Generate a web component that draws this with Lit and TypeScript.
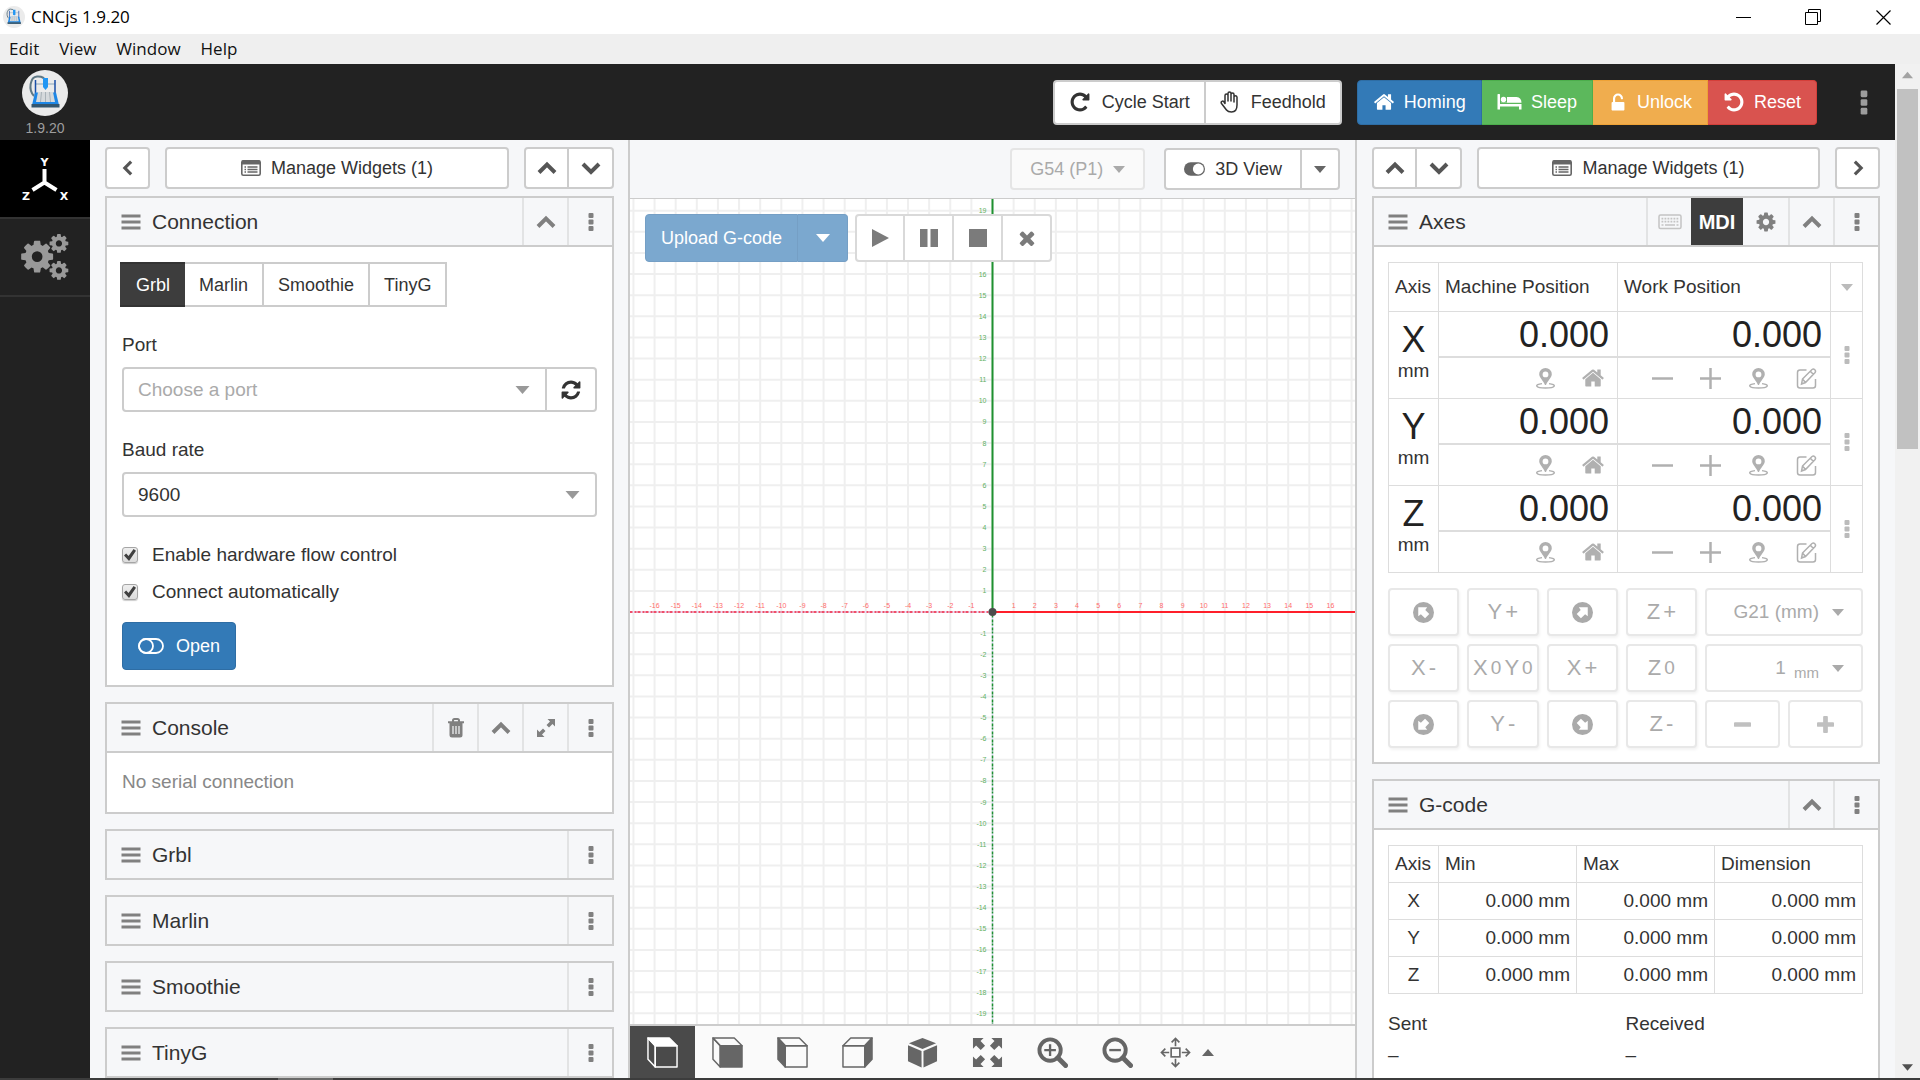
import { LitElement, html, css, svg, nothing } from "lit";
import { customElement, property } from "lit/decorators.js";

const COG =
  "M1152 896q0-106-75-181t-181-75-181 75-75 181 75 181 181 75 181-75 75-181zm512-109v222q0 12-8 23t-20 13l-185 28q-19 54-39 91 35 50 107 138 10 12 10 25t-9 23q-27 37-99 108t-94 71q-12 0-26-9l-138-108q-44 23-91 38-16 136-29 186-7 28-36 28h-222q-14 0-24.5-8.5t-11.5-21.5l-28-184q-49-16-90-37l-141 107q-10 9-25 9-14 0-25-11-126-114-165-168-7-10-7-23 0-12 8-23 15-21 51-66.5t54-70.5q-27-50-41-99l-183-27q-13-2-21-12.5t-8-23.5v-222q0-12 8-23t19-13l186-28q14-46 39-92-40-57-107-138-10-12-10-24 0-10 9-23 26-36 98.5-107.5t94.5-71.5q13 0 26 10l138 107q44-23 91-38 16-136 29-186 7-28 36-28h222q14 0 24.5 8.5t11.5 21.5l28 184q49 16 90 37l142-107q9-9 24-9 13 0 25 10 129 119 165 170 7 8 7 22 0 12-8 23-15 21-51 66.5t-54 70.5q26 50 41 98l183 28q13 2 21 12.5t8 23.5z";

const ARROW_NW = "M5 5H13.500L11.700 7.500L15.500 11.500L11.500 15.500L7.500 11.700L5 13.500Z";

const roundArrow = (turn: number) => svg`
  <circle cx="10" cy="10" r="10" fill="currentColor"/>
  <path d=${ARROW_NW} fill="#fff" transform="rotate(${turn} 10 10)"/>`;

/* name -> [viewBox, shapes] */
const ICONS: Record<string, [string, unknown]> = {
  logo: ["0 0 46 46", svg`
    <circle cx="23" cy="23" r="23" fill="#ebebeb"/>
    <path d="M12 26C6 20 8 7 15 6.500Q22 6 23.500 11" fill="none" stroke="#5f7885" stroke-width="2"/>
    <path d="M13 14H33" stroke="#8aa5b8" stroke-width="1"/>
    <path d="M13.500 10V25M33 10V25" stroke="#1b4fa8" stroke-width="1.500"/>
    <path d="M13 22.500H34L37 35H10Z" fill="#1d87e6"/>
    <path d="M16 22H31L33 32H14Z" fill="#d5d9dc"/>
    <path d="M19.500 22L18.500 32M23.500 22V32M27.500 22L28.500 32" stroke="#a9b2b8" stroke-width="1"/>
    <path d="M9.500 34H37.500V37.500H9.500Z" fill="#33566e"/>
    <path d="M21 8H26V17L23.500 20L21 17Z" fill="#2196f3"/>`],
  axes: ["0 0 48 44", svg`
    <path d="M23.500 12V25.500L11.500 33M23.500 25.500L35.500 33" fill="none" stroke="#fff" stroke-width="4"/>
    <g fill="#fff" font-family="DejaVu Sans, sans-serif" font-weight="700" font-size="11" text-anchor="middle">
      <text x="23.500" y="9">Y</text><text x="5" y="43">Z</text><text x="43" y="43">X</text>
    </g>`],
  cogs: ["0 0 48 46", svg`
    <g fill="currentColor">
      <path transform="translate(-2.500 4) scale(.0208)" d=${COG}/>
      <path transform="translate(27 -1.500) scale(.0122)" d=${COG}/>
      <path transform="translate(27 25.500) scale(.0122)" d=${COG}/>
    </g>`],
  cog: ["0 0 1792 1792", svg`<path fill="currentColor" d=${COG}/>`],
  repeat: ["0 0 1792 1792", svg`<path fill="currentColor" d="M1664 256v448q0 26-19 45t-45 19h-448q-42 0-59-40-17-39 14-69l138-138q-148-137-349-137-104 0-198.500 40.500t-163.500 109.500-109.500 163.500-40.500 198.500 40.500 198.500 109.500 163.500 163.500 109.500 198.500 40.500q119 0 225-52t179-147q7-10 23-12 15 0 25 9l137 138q9 8 9.500 20.500t-7.500 22.500q-109 132-264 204.500t-327 72.500q-156 0-298-61t-245-164-164-245-61-298 61-298 164-245 245-164 298-61q147 0 284.500 55.500t244.500 156.500l130-129q29-31 70-14 39 17 39 59z"/>`],
  undo: ["0 0 1792 1792", svg`<path fill="currentColor" d="M1664 896q0 156-61 298t-164 245-245 164-298 61q-172 0-327-72.500t-264-204.500q-7-10-6.500-22.500t8.500-20.500l137-138q10-9 25-9 16 2 23 12 73 95 179 147t225 52q104 0 198.500-40.500t163.500-109.500 109.500-163.500 40.500-198.500-40.500-198.500-109.500-163.500-163.500-109.500-198.500-40.500q-98 0-188 35.500t-160 101.500l137 138q31 30 14 69-17 40-59 40h-448q-26 0-45-19t-19-45v-448q0-42 40-59 39-17 69 14l130 129q107-101 244.500-156.500t284.500-55.500q156 0 298 61t245 164 164 245 61 298z"/>`],
  home: ["0 0 1792 1792", svg`<path fill="currentColor" d="M1472 992v480q0 26-19 45t-45 19h-384v-384h-256v384h-384q-26 0-45-19t-19-45v-480q0-1 .5-3t.5-3l575-474 575 474q1 2 1 6zm223-69l-62 74q-8 9-21 11h-3q-13 0-21-7l-692-577-692 577q-12 8-24 7-13-2-21-11l-62-74q-8-10-7-23.500t11-21.500l719-599q32-26 76-26t76 26l244 204v-195q0-14 9-23t23-9h192q14 0 23 9t9 23v408l219 182q10 8 11 21.500t-7 23.500z"/>`],
  refresh: ["0 0 1792 1792", svg`<path fill="currentColor" d="M1639 1056q0 5-1 7-64 268-268 434.500t-478 166.500q-146 0-282.500-55t-243.500-157l-129 129q-19 19-45 19t-45-19-19-45v-448q0-26 19-45t45-19h448q26 0 45 19t19 45-19 45l-137 137q71 66 161 102t187 36q134 0 250-65t186-179q11-17 53-117 8-23 30-23h192q13 0 22.500 9.500t9.500 22.500zm25-800v448q0 26-19 45t-45 19h-448q-26 0-45-19t-19-45 19-45l138-138q-148-137-349-137-134 0-250 65t-186 179q-11 17-53 117-8 23-30 23h-199q-13 0-22.500-9.500t-9.500-22.500v-7q65-268 270-434.500t480-166.500q146 0 284 55.500t245 156.500l130-129q19-19 45-19t45 19 19 45z"/>`],
  times: ["0 0 1792 1792", svg`<path fill="currentColor" d="M1490 1322q0 40-28 68l-136 136q-28 28-68 28t-68-28l-294-294-294 294q-28 28-68 28t-68-28l-136-136q-28-28-28-68t28-68l294-294-294-294q-28-28-28-68t28-68l136-136q28-28 68-28t68 28l294 294 294-294q28-28 68-28t68 28l136 136q28 28 28 68t-28 68l-294 294 294 294q28 28 28 68z"/>`],
  unlock: ["0 0 1792 1792", svg`<path fill="currentColor" d="M1376 896q40 0 68 28t28 68v576q0 40-28 68t-68 28h-960q-40 0-68-28t-28-68v-576q0-40 28-68t68-28h32v-320q0-185 131.500-316.500t316.500-131.500 316.500 131.500 131.500 316.500q0 26-19 45t-45 19h-64q-26 0-45-19t-19-45q0-106-75-181t-181-75-181 75-75 181v320h736z"/>`],
  hand: ["0 0 20 22", svg`<path fill="none" stroke="currentColor" stroke-width="1.500" stroke-linejoin="round" stroke-linecap="round" d="M5 12.500V4.500Q5 3 6.500 3T8 4.500V10M8 10V2.500Q8 1 9.500 1T11 2.500V10M11 10V3.500Q11 2 12.500 2T14 3.500V11M14 11V6Q14 4.800 15.400 4.800T17 6V14Q17 21 11.500 21Q8 21 6.500 19L1.500 12.500Q.6 11 2 10.300T4 11L5 12.500"/>`],
  bed: ["0 0 24 18", svg`<g fill="currentColor"><path d="M0 1.500Q0 1 .6 1H1.900Q2.500 1 2.500 1.500V11H24V16.500H21.500V13.500H2.500V16.500H0Z"/><circle cx="6" cy="6.500" r="2.700"/><path d="M9.500 4H19Q24 4.500 24 9.800H3.500V9.500H9.500Z"/></g>`],
  list: ["0 0 20 18", svg`<rect x=".8" y="1.800" width="18.400" height="14.400" rx="1.500" fill="none" stroke="currentColor" stroke-width="1.600"/><path d="M1 1.500H19V5.500H1Z" fill="currentColor"/><path d="M3.500 8H5M3.500 10.500H5M3.500 13H5M6.500 8H16.500M6.500 10.500H16.500M6.500 13H16.500" stroke="currentColor" stroke-width="1.300"/>`],
  up: ["0 0 20 20", svg`<path d="M2 14.500L10 6.500L18 14.500" fill="none" stroke="currentColor" stroke-width="4"/>`],
  down: ["0 0 20 20", svg`<path d="M2 6L10 14L18 6" fill="none" stroke="currentColor" stroke-width="4"/>`],
  left: ["0 0 20 20", svg`<path d="M13.500 3L6.500 10L13.500 17" fill="none" stroke="currentColor" stroke-width="3.500"/>`],
  right: ["0 0 20 20", svg`<path d="M6.500 3L13.500 10L6.500 17" fill="none" stroke="currentColor" stroke-width="3.500"/>`],
  bars: ["0 0 20 16", svg`<path d="M0.500 2H19.500M.5 8H19.500M.5 14H19.500" stroke="currentColor" stroke-width="3"/>`],
  dots: ["0 0 6 20", svg`<g fill="currentColor"><rect x=".5" y="1" width="5" height="5" rx="1"/><rect x=".5" y="7.500" width="5" height="5" rx="1"/><rect x=".5" y="14" width="5" height="5" rx="1"/></g>`],
  caret: ["0 0 14 8", svg`<path d="M0 0H14L7 8Z" fill="currentColor"/>`],
  caretUp: ["0 0 14 8", svg`<path d="M0 8H14L7 0Z" fill="currentColor"/>`],
  trash: ["0 0 18 20", svg`<path d="M6 3.500V2.500Q6 1 7.500 1H10.500Q12 1 12 2.500V3.500M1 4.300H17" fill="none" stroke="currentColor" stroke-width="2"/><path d="M2.500 5H15.500V17Q15.500 19.500 13 19.500H5Q2.500 19.500 2.500 17Z" fill="currentColor"/><path d="M6 8V16M9 8V16M12 8V16" stroke="#f6f7f8" stroke-width="1.200"/>`],
  expand: ["0 0 20 20", svg`<g fill="currentColor"><path d="M11.500 1H19V8.500L16.500 6L13 9.500L10.500 7L14 3.500ZM1 11.500V19H8.500L6 16.500L9.500 13L7 10.500L3.500 14Z"/></g>`],
  keyboard: ["0 0 24 16", svg`<rect x="1" y="1" width="22" height="13.500" rx="1.500" fill="none" stroke="currentColor" stroke-width="1.500"/><path d="M3.500 4.700H20.500M3.500 7.700H20.500" stroke="currentColor" stroke-width="1.700" stroke-dasharray="1.800 1.200"/><path d="M3.500 11H5.500M7 11H17M18.500 11H20.500" stroke="currentColor" stroke-width="1.700"/>`],
  toggleOn: ["0 0 22 14", svg`<rect x="0" y="0" width="22" height="14" rx="7" fill="currentColor"/><circle cx="15" cy="7" r="5.700" fill="#fff"/>`],
  toggleOff: ["0 0 26 16", svg`<g fill="none" stroke="currentColor" stroke-width="1.800"><rect x="1" y="1" width="24" height="14" rx="7"/><circle cx="8" cy="8" r="7"/></g>`],
  play: ["0 0 20 20", svg`<path d="M2 1L19 10L2 19Z" fill="currentColor"/>`],
  pause: ["0 0 20 20", svg`<path d="M1 1H8.500V19H1ZM11.500 1H19V19H11.500Z" fill="currentColor"/>`],
  stop: ["0 0 20 20", svg`<path d="M1 1H19V19H1Z" fill="currentColor"/>`],
  pin: ["0 0 20 21", svg`<path fill="currentColor" fill-rule="evenodd" d="M10 0A6.300 6.300 0 0 1 16.300 6.300C16.300 9.500 12 13 10.500 17H9.500C8 13 3.700 9.500 3.700 6.300A6.300 6.300 0 0 1 10 0ZM10 3.500A2.900 2.900 0 1 0 10 9.300A2.900 2.900 0 1 0 10 3.500Z"/><path d="M6.500 15.600C-1.500 16.500-.5 20 10 20S21.500 16.500 13.500 15.600" fill="none" stroke="currentColor" stroke-width="1.400"/>`],
  minus: ["0 0 22 22", svg`<path d="M0 11H22" stroke="currentColor" stroke-width="2.600"/>`],
  plus: ["0 0 22 22", svg`<path d="M0 11H22M11 0V22" stroke="currentColor" stroke-width="2.600"/>`],
  minusBold: ["0 0 18 18", svg`<rect x="0" y="6.500" width="18" height="5" rx="1" fill="currentColor"/>`],
  plusBold: ["0 0 18 18", svg`<g fill="currentColor"><rect x="0" y="6.500" width="18" height="5" rx="1"/><rect x="6.500" y="0" width="5" height="18" rx="1"/></g>`],
  edit: ["0 0 20 21", svg`<g fill="none" stroke="currentColor" stroke-width="1.500"><path d="M10 2H3.500Q1 2 1 4.500V17.500Q1 20 3.500 20H16.500Q19 20 19 17.500V11"/><path d="M6 11L15.500 1.500Q17 .5 18.300 1.800T18.600 4.500L9 14.500L5 16ZM6 11L9 14.500M14 3.500L16.800 6.300"/></g>`],
  cubeTop: ["0 0 32 32", svg`<g fill="none" stroke="currentColor" stroke-width="1.500" stroke-linejoin="round"><path d="M1 1L8.500 9V31L1 23Z"/><path d="M8.500 9H31V31H8.500Z"/><path d="M1 1H23L31 9H8.500Z" fill="currentColor"/></g>`],
  cubeFront: ["0 0 32 32", svg`<g fill="none" stroke="currentColor" stroke-width="1.500" stroke-linejoin="round"><path d="M1 1L8.500 9V31L1 23Z"/><path d="M8.500 9H31V31H8.500Z" fill="currentColor"/><path d="M1 1H23L31 9H8.500Z"/></g>`],
  cubeLeft: ["0 0 32 32", svg`<g fill="none" stroke="currentColor" stroke-width="1.500" stroke-linejoin="round"><path d="M1 1L8.500 9V31L1 23Z" fill="currentColor"/><path d="M8.500 9H31V31H8.500Z"/><path d="M1 1H23L31 9H8.500Z"/></g>`],
  cubeRight: ["0 0 32 32", svg`<g fill="none" stroke="currentColor" stroke-width="1.500" stroke-linejoin="round"><path d="M31 1L23.500 9V31L31 23Z" fill="currentColor"/><path d="M1 9H23.500V31H1Z"/><path d="M31 1H9L1 9H23.500Z"/></g>`],
  cube3d: ["0 0 32 32", svg`<g fill="currentColor"><path d="M16 1L30 6.500L16 12.500L2 6.500Z"/><path d="M1 8.500L15 14.500V31.500L1 25Z"/><path d="M31 8.500L17 14.500V31.500L31 25Z"/></g>`],
  arrowsAlt: ["0 0 32 32", svg`<g fill="currentColor">${[0, 90, 180, 270].map((a) => svg`<path transform="rotate(${a} 16 16)" d="M1 1H12L8.800 4.200L13.500 9L9 13.500L4.200 8.800L1 12Z"/>`)}</g>`],
  zoomIn: ["0 0 32 32", svg`<g fill="none" stroke="currentColor"><circle cx="13.500" cy="13.500" r="11" stroke-width="4"/><path d="M21.500 21.500L29.500 29.500" stroke-width="5" stroke-linecap="round"/><path d="M7.500 13.500H19.500M13.500 7.500V19.500" stroke-width="2.400"/></g>`],
  zoomOut: ["0 0 32 32", svg`<g fill="none" stroke="currentColor"><circle cx="13.500" cy="13.500" r="11" stroke-width="4"/><path d="M21.500 21.500L29.500 29.500" stroke-width="5" stroke-linecap="round"/><path d="M7.500 13.500H19.500" stroke-width="2.400"/></g>`],
  move: ["0 0 32 32", svg`<g fill="none" stroke="currentColor" stroke-width="1.700"><rect x="11.500" y="11.500" width="9" height="9"/>${[0, 90, 180, 270].map((a) => svg`<path transform="rotate(${a} 16 16)" d="M16 9.500V2M12 5.500L16 1.500L20 5.500"/>`)}</g>`],
  nw: ["0 0 20 20", roundArrow(0)],
  ne: ["0 0 20 20", roundArrow(90)],
  se: ["0 0 20 20", roundArrow(180)],
  sw: ["0 0 20 20", roundArrow(270)],
  winMin: ["0 0 15 15", svg`<path d="M0 7.500H15" stroke="#000"/>`],
  winRestore: ["0 0 16 16", svg`<path d="M.5 3.500H12.500V15.500H.5ZM3.500 3.500V.5H15.500V12.500H12.500" fill="none" stroke="#000"/>`],
  winClose: ["0 0 15 15", svg`<path d="M.5 .5L14.500 14.500M14.500 .5L.5 14.500" stroke="#000" stroke-width="1.200"/>`],
};

const icon = (name: string, w: number, h = w) => {
  const [box, shapes] = ICONS[name];
  return html`<svg class="icon" viewBox=${box} width=${w} height=${h} aria-hidden="true">${shapes}</svg>`;
};

const range = (n: number) => Array.from({ length: 2 * n + 1 }, (_, i) => i - n);

@customElement("work-grid")
export class WorkGrid extends LitElement {
  static styles = css`
    :host { display: block; background: #fff; overflow: hidden; font-family: "Liberation Sans", Arial, sans-serif; }
    .plot { display: block; width: 100%; height: 100%; }
    .tick { font-size: 7px; }
    .tick-x { fill: #ff6b6b; text-anchor: middle; }
    .tick-y { fill: #63b163; text-anchor: end; }
  `;

  render() {
    const pitch = 21.12;
    const reach = 45 * pitch;
    return html`
      <svg class="plot" role="img" aria-label="Toolpath view">
        <svg x="50%" y="50%" overflow="visible">
          <g stroke="#efefef" stroke-width="2">
            ${range(45).map((n) => svg`
              <path d="M${n * pitch} ${-reach}V${reach}"/>
              <path d="M${-reach} ${n * pitch + 0.5}H${reach}"/>`)}
          </g>
          <path d="M0 0V${-reach}" stroke="#1f9130" stroke-width="2"/>
          <path d="M0 0V${reach}" stroke="#d8d8ff" stroke-width="1"/>
          <path d="M0 0V${reach}" stroke="#1f9130" stroke-width="1.500" stroke-dasharray="3 1 2 2"/>
          <path d="M0 .5H${reach}" stroke="#ff1f2a" stroke-width="2"/>
          <path d="M0 .5H${-reach}" stroke="#e0d0ff" stroke-width="1"/>
          <path d="M0 .5H${-reach}" stroke="#f2203c" stroke-width="1.500" stroke-dasharray="3 1 2 2"/>
          ${range(16).filter((n) => n !== 0).map((n) => svg`<text class="tick tick-x" x=${n * pitch} y="-4">${n}</text>`)}
          ${range(19).filter((n) => n !== 0).map((n) => svg`<text class="tick tick-y" x="-6" y=${-n * pitch + 3}>${n}</text>`)}
          <circle cx="0" cy=".5" r="4" fill="#4c4c4c"/>
        </svg>
      </svg>`;
  }
}

@customElement("app-root")
export class AppRoot extends LitElement {
  @property() version = "1.9.20";

  static styles = css`
    :host { display: block; font: 19px/24px "Liberation Sans", Arial, sans-serif; color: #333; }
    * { box-sizing: border-box; }
    button, select { font: inherit; color: inherit; margin: 0; padding: 0; background: none; border: 0; border-radius: 0; }
    .icon { display: block; flex: none; }
    .shell { height: 100vh; display: flex; flex-direction: column; overflow: hidden; background: #fff; }

    .titlebar { flex: none; height: 34px; padding: 0 2px 0 3px; display: flex; align-items: center; gap: 6px; font: 17px/24px "Open Sans", "Noto Sans", sans-serif; color: #000; }
    .titlebar-name { flex: 1; }
    .win-btn { width: 70px; height: 32px; display: grid; place-items: center; }
    .menubar { flex: none; height: 30px; display: flex; align-items: center; gap: 20px; padding: 0 9px; background: #efefef; font: 17px/24px "Open Sans", "Noto Sans", sans-serif; color: #111; }

    .viewport { flex: 1; min-height: 0; display: flex; }
    .page { flex: 1; min-width: 0; display: flex; flex-direction: column; }
    .scrollbar { flex: none; width: 25px; background: #f1f1f1; display: flex; flex-direction: column; align-items: center; padding: 7px 2px; color: #505050; }
    .scrollbar-up { color: #a3a3a3; }
    .scrollbar-thumb { width: 21px; height: 36%; margin-top: 10px; margin-bottom: auto; background: #c1c1c1; }
    .taskbar { flex: none; height: 2px; background: #3c3c3c; padding-left: 278px; }
    .taskbar-active { display: block; width: 55px; height: 2px; background: #6a6a6a; }

    .navbar { flex: none; height: 76px; background: #222; display: flex; align-items: center; padding-right: 16px; }
    .brand { align-self: flex-start; width: 90px; padding-top: 6px; display: flex; flex-direction: column; align-items: center; gap: 3px; color: #9d9d9d; font-size: 14px; line-height: 18px; text-decoration: none; }
    .nav-actions { margin-left: auto; display: flex; align-items: center; gap: 15px; }
    .nav-more { width: 30px; height: 40px; margin-left: 17px; display: grid; place-items: center; color: #9d9d9d; }
    .group { display: flex; }
    .btn { height: 42px; border: 2px solid #ccc; border-radius: 4px; background: #fff; font-size: 18px; display: flex; align-items: center; justify-content: center; gap: 10px; white-space: nowrap; }
    .group > .btn + .btn { border-left: 0; }
    .group > .btn:not(:first-child) { border-top-left-radius: 0; border-bottom-left-radius: 0; }
    .group > .btn:not(:last-child) { border-top-right-radius: 0; border-bottom-right-radius: 0; }
    .nav-btn { height: 45px; padding: 0 14px; gap: 11px; }
    .nav-btn.solid { color: #fff; padding: 0 15px; border: 1px solid; gap: 9px; }
    .nav-btn.blue { background: #337ab7; border-color: #2e6da4; }
    .nav-btn.green { background: #5cb85c; border-color: #4cae4c; }
    .nav-btn.amber { background: #f0ad4e; border-color: #eea236; }
    .nav-btn.red { background: #d9534f; border-color: #d43f3a; }

    .workspace { flex: 1; min-height: 0; display: grid; grid-template-columns: 90px 540px minmax(0, 1fr) 540px; }
    .sidebar { background: #222; }
    .side-link { height: 78px; border-bottom: 2px solid #333; display: grid; place-items: center; color: #999; }
    .side-link.active { background: #000; height: 79px; }
    .panel { background: #f6f7f9; overflow: hidden; display: flex; flex-direction: column; gap: 15px; padding: 7px 15px 0; }
    .panel-left { padding-right: 14px; border-right: 2px solid #ccc; }
    .panel-right { border-left: 2px solid #ccc; }
    .panel > * { flex: none; }
    .panel-bar { display: flex; gap: 15px; margin-bottom: -8px; color: #333; }
    .panel-bar .square { width: 45px; color: #555; }
    .panel-bar .manage { flex: 1; }
    .dim { color: #666; }

    .widget { border: 2px solid #ccc; background: #fff; }
    .widget-head { height: 47px; background: #f6f7f9; display: flex; align-items: center; padding-left: 14px; color: #808080; }
    .widget-head.expanded { height: 49px; border-bottom: 2px solid #ccc; }
    .widget-title { flex: 1; margin: 0; padding-left: 11px; font-size: 21px; line-height: 24px; font-weight: 400; color: #333; }
    .head-btn { width: 45px; height: 47px; border-left: 2px solid #e2e3e4; display: grid; place-items: center; }
    .head-btn.text { width: 52px; background: #3d3d3d; color: #fff; border: 0; font-size: 20px; font-weight: 700; }
    .head-btn.text + .head-btn { border-left: 0; }
    .head-btn.faint { color: #c4c4c4; }

    .connection { padding: 15px; display: flex; flex-direction: column; align-items: stretch; }
    .tabs { display: flex; margin-left: -2px; }
    .tab { height: 45px; border: 2px solid #ccc; border-left: 0; padding: 0 14px; font-size: 18px; background: #fff; }
    .tab.active { background: #3d3d3d; border-color: #333; color: #fff; border-right: 0; padding: 0 15px 0 16px; }
    .field-label { margin: 26px 0 10px; }
    .field { display: flex; }
    .select-wrap { flex: 1; display: grid; align-items: center; border: 2px solid #ccc; border-radius: 4px; height: 45px; background: #fff; }
    .select-wrap > * { grid-area: 1 / 1; }
    .select-wrap .icon { justify-self: end; margin-right: 15px; color: #999; pointer-events: none; }
    .picker { appearance: none; width: 100%; height: 41px; padding: 0 14px; outline: 0; }
    .picker.empty { color: #aaa; }
    .select-wrap.joined { border-top-right-radius: 0; border-bottom-right-radius: 0; }
    .refresh { width: 50px; height: 45px; border-left: 0; border-radius: 0 4px 4px 0; }
    .checks { margin: 26px 0 18px; display: flex; flex-direction: column; gap: 13px; }
    .check { display: flex; align-items: center; gap: 14px; }
    .check-box { appearance: none; width: 16px; height: 16px; margin: 0; border: 1px solid #a5a5a5; border-radius: 3px; background: linear-gradient(#eee, #dcdcdc); box-shadow: 0 1px 1px #0003; display: grid; place-items: center; }
    .check-box:checked::before { content: ""; width: 12px; height: 12px; background: #404040; clip-path: polygon(0 55%, 18% 38%, 38% 58%, 80% 0, 100% 14%, 42% 100%); }
    .connect { align-self: flex-start; height: 48px; padding: 0 15px; background: #337ab7; border: 1px solid #2e6da4; color: #fff; gap: 12px; }
    .note { padding: 17px 15px 18px; color: #888; }

    .stage { display: flex; flex-direction: column; min-height: 0; background: #f6f7f9; }
    .stage-bar { flex: none; height: 59px; border-bottom: 1px solid #ccc; padding: 8px 15px; display: flex; justify-content: flex-end; gap: 19px; }
    .btn.off { color: #aaa; border-color: #e5e5e5; background: #fafafa; }
    .wcs { padding: 0 18px; }
    .view-3d { padding: 0 18px; color: #333; }
    .narrow { width: 38px; color: #666; }
    .stage-body { flex: 1; min-height: 0; position: relative; }
    .stage-grid { height: 100%; }
    .overlay { position: absolute; top: 15px; left: 15px; display: flex; gap: 7px; }
    .upload { height: 48px; background: #7ba8cf; border: 1px solid #759fc5; color: #fff; padding: 0 15px; }
    .upload-more { width: 50px; padding: 0; border-left: 1px solid #759fc5; }
    .ctl { width: 49px; height: 48px; color: #7b7b7b; border-color: #d9d9d9; }
    .group > .ctl:first-child { width: 50px; }
    .view-bar { flex: none; height: 54px; border-top: 2px solid #ccc; background: #fafafa; display: flex; align-items: stretch; color: #666; }
    .view-btn { width: 65px; display: flex; align-items: center; justify-content: center; gap: 11px; }
    .view-btn.active { background: #4a4a4a; color: #fff; }
    .view-btn.wide { width: 74px; }

    table { border-collapse: collapse; width: 100%; table-layout: fixed; }
    th, td { border: 1px solid #ddd; padding: 0; font-weight: 400; }
    .axes { padding: 15px 15px 14px 14px; }
    .axes-head th { height: 49px; text-align: left; padding: 0 6px; white-space: nowrap; }
    .c-axis { width: 50px; }
    .c-machine { width: 179px; }
    .c-more { width: 32px; }
    .axes-name { text-align: center; }
    .axes-letter { display: block; font-size: 36px; line-height: 38px; color: #222; }
    .axes-unit { display: block; line-height: 24px; padding-bottom: 7px; }
    .value { height: 46px; border-bottom: 2px solid #ddd; padding-right: 8px; text-align: right; font-size: 36px; line-height: 46px; color: #222; }
    .row-actions { height: 40px; display: flex; justify-content: flex-end; align-items: center; color: #b0b0b0; }
    .row-btn { width: 48px; height: 38px; display: grid; place-items: center; }
    .cell-btn { width: 100%; height: 40px; display: grid; place-items: center; color: #bbb; }
    .jog { display: grid; grid-template-columns: repeat(4, minmax(0, 1fr)) 158px; gap: 8px; margin-top: 15px; }
    .jog-btn { height: 48px; border: 2px solid #e8e8e8; border-radius: 4px; background: #fff; color: #aaa; font-size: 22px; display: flex; align-items: center; justify-content: center; gap: 3px; box-shadow: 1px 2px 3px #0000000d; }
    .jog-small { font-size: 19px; }
    .jog-pick { justify-content: flex-end; padding-right: 17px; gap: 13px; font-size: 19px; box-shadow: none; }
    .jog-pick sub { font-size: 15px; line-height: 15px; vertical-align: -4px; margin-left: 3px; }
    .jog-pair { display: flex; gap: 8px; }
    .jog-pair .jog-btn { flex: 1; color: #c0c0c0; box-shadow: none; }

    .gcode { padding: 15px 15px 0 14px; }
    .gcode-table th, .gcode-table td { height: 37px; padding: 0 6px; text-align: left; }
    .gcode-table td { text-align: right; }
    .gcode-table tbody th { text-align: center; }
    .c-third { width: 138px; }
    .stats { display: grid; grid-template-columns: 1fr 1fr; margin: 18px 0 0; padding-bottom: 90px; }
    .stats dt, .stats dd { margin: 0; }
    .stats dd { margin-top: 7px; }
  `;

  private headButton(name: string) {
    const defs: Record<string, [string, number, number, string]> = {
      trash: ["trash", 18, 20, "Clear"],
      up: ["up", 20, 20, "Collapse"],
      expand: ["expand", 20, 20, "Fullscreen"],
      dots: ["dots", 6, 20, "More"],
      cog: ["cog", 22, 22, "Settings"],
      keyboard: ["keyboard", 24, 16, "Keypad"],
    };
    if (name === "MDI") return html`<button class="head-btn text">MDI</button>`;
    const [i, w, h, label] = defs[name];
    return html`<button class="head-btn ${name === "keyboard" ? "faint" : ""}" aria-label=${label}>${icon(i, w, h)}</button>`;
  }

  private widget(title: string, actions: string[], body: unknown = nothing) {
    return html`
      <section class="widget">
        <header class="widget-head ${body === nothing ? "" : "expanded"}">
          ${icon("bars", 20, 16)}
          <h2 class="widget-title">${title}</h2>
          ${actions.map((a) => this.headButton(a))}
        </header>
        ${body}
      </section>`;
  }

  private panelBar(side: "left" | "right") {
    const toggle = html`<button class="btn square" aria-label="Hide panel">${icon(side, 18)}</button>`;
    const manage = html`<button class="btn manage"><span class="dim">${icon("list", 20, 18)}</span>Manage Widgets (1)</button>`;
    const fold = html`
      <div class="group">
        <button class="btn square" aria-label="Collapse all">${icon("up", 20)}</button>
        <button class="btn square" aria-label="Expand all">${icon("down", 20)}</button>
      </div>`;
    return html`<div class="panel-bar">${side === "left" ? [toggle, manage, fold] : [fold, manage, toggle]}</div>`;
  }

  private connection() {
    return html`
      <div class="connection">
        <div class="tabs">
          ${["Grbl", "Marlin", "Smoothie", "TinyG"].map((t, i) => html`<button class="tab ${i === 0 ? "active" : ""}">${t}</button>`)}
        </div>
        <label class="field-label" for="port">Port</label>
        <div class="field">
          <div class="select-wrap joined">
            <select class="picker empty" id="port"><option>Choose a port</option></select>
            ${icon("caret", 15, 8)}
          </div>
          <button class="btn refresh" aria-label="Refresh">${icon("refresh", 22)}</button>
        </div>
        <label class="field-label" for="baud">Baud rate</label>
        <div class="field">
          <div class="select-wrap">
            <select class="picker" id="baud"><option>9600</option></select>
            ${icon("caret", 15, 8)}
          </div>
        </div>
        <div class="checks">
          <label class="check"><input class="check-box" type="checkbox" checked />Enable hardware flow control</label>
          <label class="check"><input class="check-box" type="checkbox" checked />Connect automatically</label>
        </div>
        <button class="btn connect">${icon("toggleOff", 26, 16)}Open</button>
      </div>`;
  }

  private axes() {
    const act = (name: string, label: string, w = 21) =>
      html`<button class="row-btn" aria-label=${label}>${icon(name, w)}</button>`;
    return html`
      <div class="axes">
        <table>
          <colgroup><col class="c-axis" /><col class="c-machine" /><col /><col class="c-more" /></colgroup>
          <thead>
            <tr class="axes-head">
              <th scope="col">Axis</th>
              <th scope="col">Machine Position</th>
              <th scope="col">Work Position</th>
              <td><button class="cell-btn" aria-label="Axis options">${icon("caret", 12, 7)}</button></td>
            </tr>
          </thead>
          <tbody>
            ${["X", "Y", "Z"].map((a) => html`
              <tr>
                <th class="axes-name" scope="row"><span class="axes-letter">${a}</span><span class="axes-unit">mm</span></th>
                <td>
                  <div class="value">0.000</div>
                  <div class="row-actions">${act("pin", "Go to zero")}${act("home", "Home", 24)}</div>
                </td>
                <td>
                  <div class="value">0.000</div>
                  <div class="row-actions">${act("minus", "Decrease")}${act("plus", "Increase")}${act("pin", "Go to zero")}${act("edit", "Edit")}</div>
                </td>
                <td><button class="cell-btn" aria-label="More">${icon("dots", 6, 20)}</button></td>
              </tr>`)}
          </tbody>
        </table>
        <div class="jog">
          <button class="jog-btn" aria-label="X- Y+">${icon("nw", 21)}</button>
          <button class="jog-btn"><span>Y</span><span>+</span></button>
          <button class="jog-btn" aria-label="X+ Y+">${icon("ne", 21)}</button>
          <button class="jog-btn"><span>Z</span><span>+</span></button>
          <button class="jog-btn jog-pick">G21 (mm)${icon("caret", 12, 7)}</button>
          <button class="jog-btn"><span>X</span><span>-</span></button>
          <button class="jog-btn"><span>X</span><span class="jog-small">0</span><span>Y</span><span class="jog-small">0</span></button>
          <button class="jog-btn"><span>X</span><span>+</span></button>
          <button class="jog-btn"><span>Z</span><span class="jog-small">0</span></button>
          <button class="jog-btn jog-pick"><span>1 <sub>mm</sub></span>${icon("caret", 12, 7)}</button>
          <button class="jog-btn" aria-label="X- Y-">${icon("sw", 21)}</button>
          <button class="jog-btn"><span>Y</span><span>-</span></button>
          <button class="jog-btn" aria-label="X+ Y-">${icon("se", 21)}</button>
          <button class="jog-btn"><span>Z</span><span>-</span></button>
          <div class="jog-pair">
            <button class="jog-btn" aria-label="Smaller step">${icon("minusBold", 17)}</button>
            <button class="jog-btn" aria-label="Larger step">${icon("plusBold", 17)}</button>
          </div>
        </div>
      </div>`;
  }

  private gcode() {
    return html`
      <div class="gcode">
        <table class="gcode-table">
          <colgroup><col class="c-axis" /><col class="c-third" /><col class="c-third" /><col /></colgroup>
          <thead><tr>${["Axis", "Min", "Max", "Dimension"].map((h) => html`<th scope="col">${h}</th>`)}</tr></thead>
          <tbody>
            ${["X", "Y", "Z"].map((a) => html`<tr><th scope="row">${a}</th><td>0.000 mm</td><td>0.000 mm</td><td>0.000 mm</td></tr>`)}
          </tbody>
        </table>
        <dl class="stats">
          <div><dt>Sent</dt><dd>–</dd></div>
          <div><dt>Received</dt><dd>–</dd></div>
        </dl>
      </div>`;
  }

  private stage() {
    const views: [string, string][] = [
      ["cubeTop", "Top view"], ["cubeFront", "Front view"], ["cubeLeft", "Left view"], ["cubeRight", "Right view"],
      ["cube3d", "3D view"], ["arrowsAlt", "Zoom to fit"], ["zoomIn", "Zoom in"], ["zoomOut", "Zoom out"],
    ];
    return html`
      <main class="stage">
        <div class="stage-bar">
          <button class="btn off wcs">G54 (P1)${icon("caret", 12, 7)}</button>
          <div class="group">
            <button class="btn view-3d"><span class="dim">${icon("toggleOn", 21, 14)}</span>3D View</button>
            <button class="btn narrow" aria-label="View options">${icon("caret", 12, 7)}</button>
          </div>
        </div>
        <div class="stage-body">
          <work-grid class="stage-grid"></work-grid>
          <div class="overlay">
            <div class="group">
              <button class="btn upload">Upload G-code</button>
              <button class="btn upload upload-more" aria-label="Upload options">${icon("caret", 14, 8)}</button>
            </div>
            <div class="group">
              <button class="btn ctl" aria-label="Run">${icon("play", 20)}</button>
              <button class="btn ctl" aria-label="Pause">${icon("pause", 20)}</button>
              <button class="btn ctl" aria-label="Stop">${icon("stop", 20)}</button>
              <button class="btn ctl" aria-label="Close">${icon("times", 22)}</button>
            </div>
          </div>
        </div>
        <div class="view-bar">
          ${views.map(([n, l], i) => html`<button class="view-btn ${i === 0 ? "active" : ""}" aria-label=${l}>${icon(n, 31)}</button>`)}
          <button class="view-btn wide" aria-label="Move">${icon("move", 31)}${icon("caretUp", 12, 7)}</button>
        </div>
      </main>`;
  }

  render() {
    return html`
      <div class="shell">
        <div class="titlebar">
          ${icon("logo", 22)}
          <span class="titlebar-name">CNCjs ${this.version}</span>
          <div class="group">
            <button class="win-btn" aria-label="Minimize">${icon("winMin", 15)}</button>
            <button class="win-btn" aria-label="Restore">${icon("winRestore", 16)}</button>
            <button class="win-btn" aria-label="Close">${icon("winClose", 15)}</button>
          </div>
        </div>
        <nav class="menubar">
          ${["Edit", "View", "Window", "Help"].map((m) => html`<button>${m}</button>`)}
        </nav>
        <div class="viewport">
          <div class="page">
            <header class="navbar">
              <a class="brand" href="#">${icon("logo", 46)}<span>${this.version}</span></a>
              <div class="nav-actions">
                <div class="group">
                  <button class="btn nav-btn">${icon("repeat", 22)}Cycle Start</button>
                  <button class="btn nav-btn">${icon("hand", 20, 22)}Feedhold</button>
                </div>
                <div class="group">
                  <button class="btn nav-btn solid blue">${icon("home", 22)}Homing</button>
                  <button class="btn nav-btn solid green">${icon("bed", 25, 18)}Sleep</button>
                  <button class="btn nav-btn solid amber">${icon("unlock", 20)}Unlock</button>
                  <button class="btn nav-btn solid red">${icon("undo", 22)}Reset</button>
                </div>
                <button class="nav-more" aria-label="More">${icon("dots", 8, 27)}</button>
              </div>
            </header>
            <div class="workspace">
              <nav class="sidebar">
                <a class="side-link active" href="#workspace" aria-label="Workspace">${icon("axes", 48, 44)}</a>
                <a class="side-link" href="#settings" aria-label="Settings">${icon("cogs", 48, 46)}</a>
              </nav>
              <aside class="panel panel-left">
                ${this.panelBar("left")}
                ${this.widget("Connection", ["up", "dots"], this.connection())}
                ${this.widget("Console", ["trash", "up", "expand", "dots"], html`<div class="note">No serial connection</div>`)}
                ${["Grbl", "Marlin", "Smoothie", "TinyG"].map((t) => this.widget(t, ["dots"]))}
              </aside>
              ${this.stage()}
              <aside class="panel panel-right">
                ${this.panelBar("right")}
                ${this.widget("Axes", ["keyboard", "MDI", "cog", "up", "dots"], this.axes())}
                ${this.widget("G-code", ["up", "dots"], this.gcode())}
              </aside>
            </div>
          </div>
          <div class="scrollbar" aria-hidden="true">
            <span class="scrollbar-up">${icon("caretUp", 11, 8)}</span>
            <span class="scrollbar-thumb"></span>
            ${icon("caret", 11, 7)}
          </div>
        </div>
        <div class="taskbar"><span class="taskbar-active"></span></div>
      </div>`;
  }
}
